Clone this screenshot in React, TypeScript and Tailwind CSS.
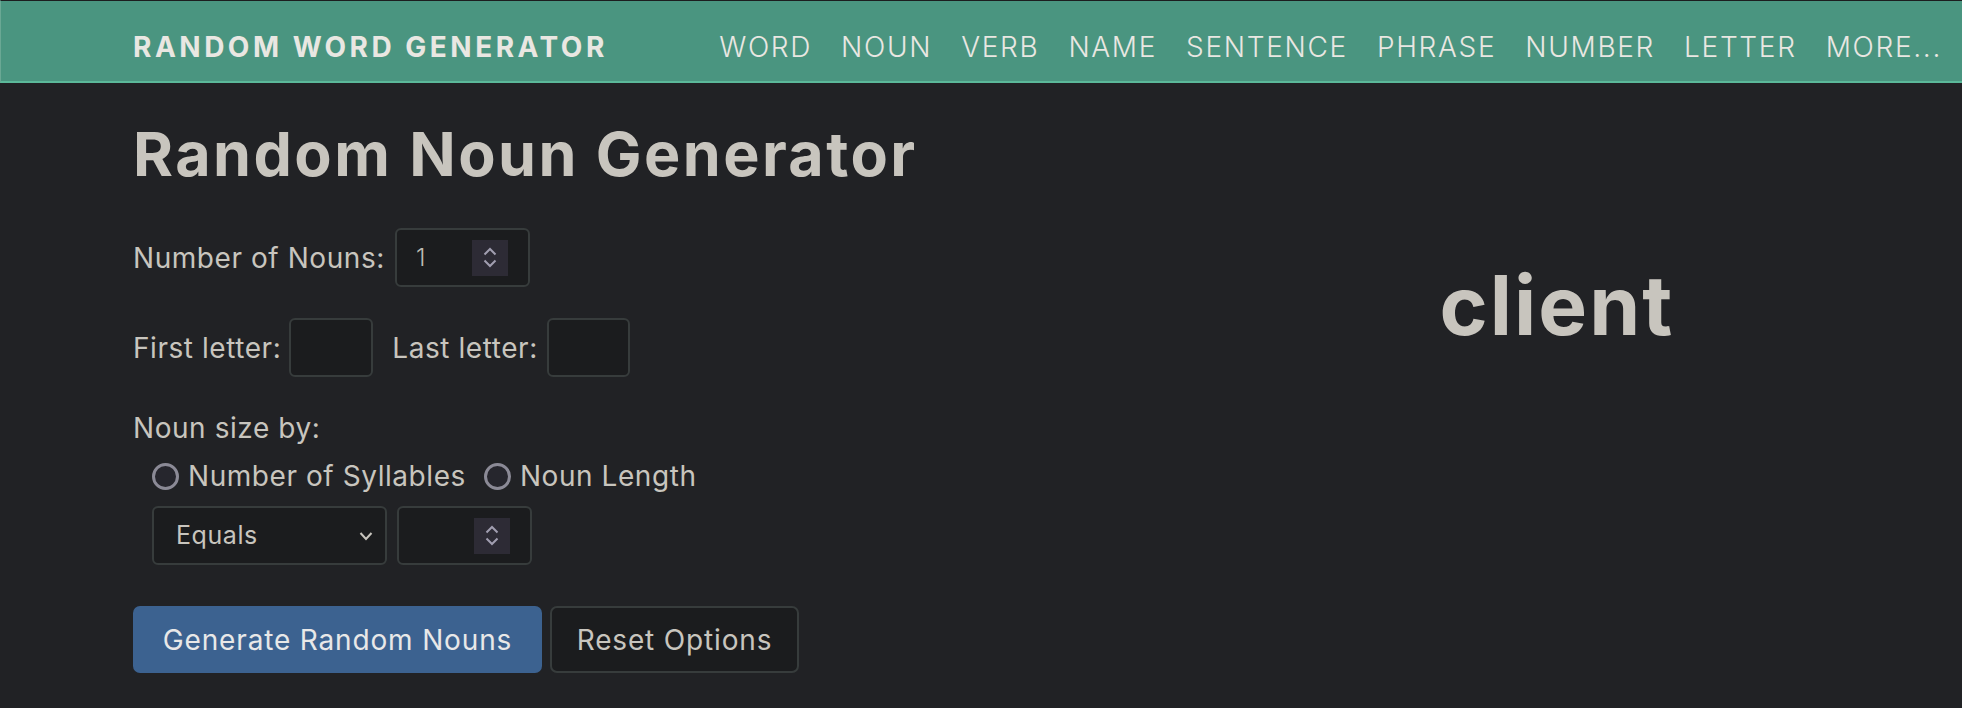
import React from "react";

const NAV = ["WORD", "NOUN", "VERB", "NAME", "SENTENCE", "PHRASE", "NUMBER", "LETTER", "MORE..."];

function Spinner() {
  return (
    <div className="flex h-[36px] w-[36px] flex-col items-center justify-center gap-[3px] bg-[#2d2b35]">
      <svg width="14" height="9" viewBox="0 0 14 9" fill="none" stroke="#a19eb0" strokeWidth="2">
        <path d="M1.5 7.5 L7 2 L12.5 7.5" />
      </svg>
      <svg width="14" height="9" viewBox="0 0 14 9" fill="none" stroke="#a19eb0" strokeWidth="2">
        <path d="M1.5 1.5 L7 7 L12.5 1.5" />
      </svg>
    </div>
  );
}

function Box({ className, children }: { className: string; children?: React.ReactNode }) {
  return (
    <div
      className={
        "flex items-center rounded-[6px] border-2 border-[#373c3c] bg-[#1b1c1e] " + className
      }
    >
      {children}
    </div>
  );
}

function Radio({ label }: { label: string }) {
  return (
    <label className="flex items-center gap-[9px]">
      <span className="h-[27px] w-[27px] rounded-full border-[3px] border-[#8b8a96] bg-[#26262d]" />
      <span>{label}</span>
    </label>
  );
}

export default function App() {
  return (
    <div className="min-h-[708px] bg-[#212225] font-['Inter','Liberation_Sans',sans-serif] text-[#c8c5be]">
      {/* Top bar */}
      <header className="flex h-[83px] items-center justify-between border-t border-b-2 border-l border-t-[#1c1d1f] border-b-[#5bb99a] border-l-[#6aa894] bg-[#4a9580] pr-[20px] pl-[132px] pt-[11px] text-[#e9e7e2]">
        <div className="text-[28px] font-bold tracking-[0.125em]">RANDOM WORD GENERATOR</div>
        <nav className="flex gap-[29px] text-[28px] font-light tracking-[0.06em]">
          {NAV.map((n) => (
            <a key={n}>{n}</a>
          ))}
        </nav>
      </header>

      <main className="flex pr-[133px] pl-[133px]">
        <section className="w-[1040px] pt-[36px] tracking-[0.035em]">
          <h1 className="text-[61px] leading-[71px] font-bold tracking-[0.04em]">Random Noun Generator</h1>

          <div className="mt-[38px] flex items-center gap-[10px] text-[28px]">
            <span>Number of Nouns:</span>
            <Box className="h-[59px] w-[135px] justify-between pr-[20px] pl-[19px]">
              <span className="text-[24px] font-light text-[#bdbab3]">1</span>
              <Spinner />
            </Box>
          </div>

          <div className="mt-[31px] flex items-center text-[28px]">
            <span>First letter:</span>
            <Box className="ml-[8px] h-[59px] w-[84px]" />
            <span className="ml-[19px]">Last letter:</span>
            <Box className="ml-[9px] h-[59px] w-[83px]" />
          </div>

          <div className="mt-[30px] text-[28px]">Noun size by:</div>

          <div className="mt-[6px] ml-[19px] flex items-center gap-[18px] text-[28px]">
            <Radio label="Number of Syllables" />
            <Radio label="Noun Length" />
          </div>

          <div className="mt-[9px] ml-[19px] flex gap-[10px]">
            <Box className="h-[59px] w-[235px] justify-between pr-[12px] pl-[22px]">
              <span className="text-[25px] text-[#c8c5be]">Equals</span>
              <svg width="14" height="10" viewBox="0 0 14 10" fill="none" stroke="#c8c5be" strokeWidth="2">
                <path d="M1.5 2 L7 8 L12.5 2" />
              </svg>
            </Box>
            <Box className="h-[59px] w-[135px] justify-end pr-[20px]">
              <Spinner />
            </Box>
          </div>

          <div className="mt-[41px] flex gap-[8px] text-[28px]">
            <button className="h-[67px] w-[409px] rounded-[7px] bg-[#3c6290] tracking-[0.03em] text-[#e8e8e8]">
              Generate Random Nouns
            </button>
            <button className="h-[67px] w-[249px] rounded-[7px] border-2 border-[#373c3c] bg-[#1b1c1e] tracking-[0.03em] text-[#c8c5be]">
              Reset Options
            </button>
          </div>
        </section>

        <section className="flex-1 pt-[182px] pl-[112px] text-center">
          <div className="text-[82px] leading-none font-bold tracking-[0.025em]">client</div>
        </section>
      </main>
    </div>
  );
}
